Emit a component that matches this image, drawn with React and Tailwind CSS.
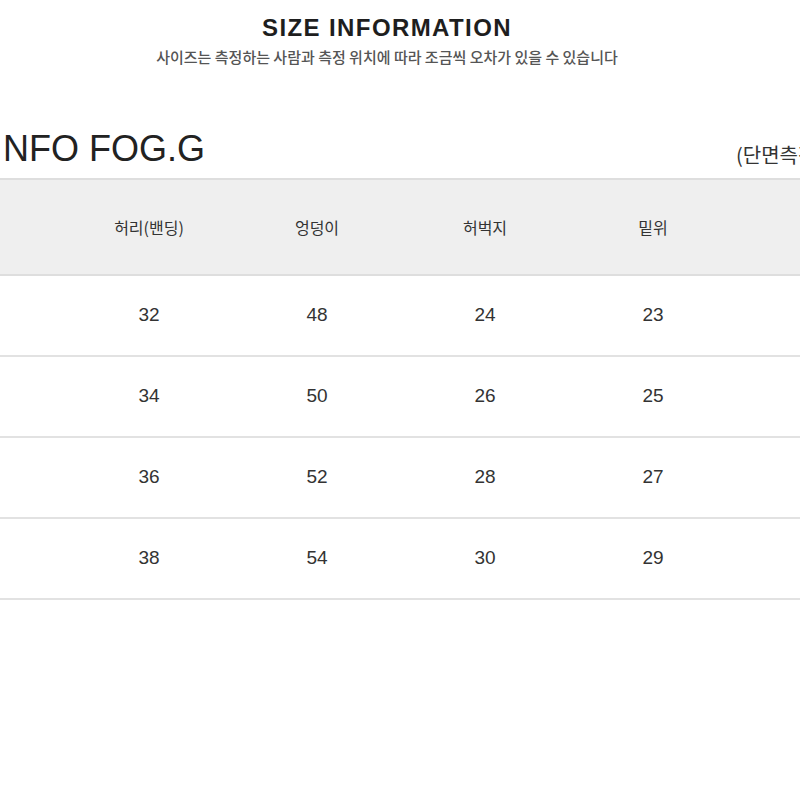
import React from "react";

const cols = ["허리(밴딩)", "엉덩이", "허벅지", "밑위"];
const rows = [
  ["32", "48", "24", "23"],
  ["34", "50", "26", "25"],
  ["36", "52", "28", "27"],
  ["38", "54", "30", "29"],
];

const kr = { fontFamily: '"Noto Sans CJK KR", "Noto Sans", sans-serif' };
const lat = { fontFamily: '"Liberation Sans", "Noto Sans CJK KR", sans-serif' };

export default function App() {
  return (
    <div className="w-[800px] h-[800px] bg-white overflow-hidden">
      <div className="w-[774px] pt-[10px] text-center">
        <div
          className="text-[24px] leading-[36px] font-bold text-[#1e1e1e] tracking-[1.4px]"
          style={lat}
        >
          SIZE INFORMATION
        </div>
        <div className="mt-[1px] text-[15px] leading-[20px] font-medium text-[#555]" style={kr}>
          사이즈는 측정하는 사람과 측정 위치에 따라 조금씩 오차가 있을 수 있습니다
        </div>
      </div>
      <div className="flex items-end h-[111px] pb-[9px] w-[900px]">
        <div className="pl-[3px] w-[736px] text-[36px] leading-[40px] text-[#222]" style={lat}>
          NFO FOG.G
        </div>
        <div className="text-[20px] leading-[28px] text-[#333] whitespace-nowrap" style={kr}>
          (단면측정)
        </div>
      </div>
      <div className="w-[800px]">
        <div className="grid grid-cols-[65px_168px_168px_168px_168px_63px] h-[98px] bg-[#efefef] border-y-2 border-[#dedede] items-center">
          <div />
          {cols.map((c) => (
            <div key={c} className="text-center text-[16px] text-[#333]" style={kr}>
              {c}
            </div>
          ))}
          <div />
        </div>
        {rows.map((r, i) => (
          <div
            key={i}
            className="grid grid-cols-[65px_168px_168px_168px_168px_63px] h-[81px] border-b-2 border-[#e2e2e2] items-center"
          >
            <div />
            {r.map((v, j) => (
              <div key={j} className="text-center text-[19px] text-[#333]" style={lat}>
                {v}
              </div>
            ))}
            <div />
          </div>
        ))}
      </div>
    </div>
  );
}
